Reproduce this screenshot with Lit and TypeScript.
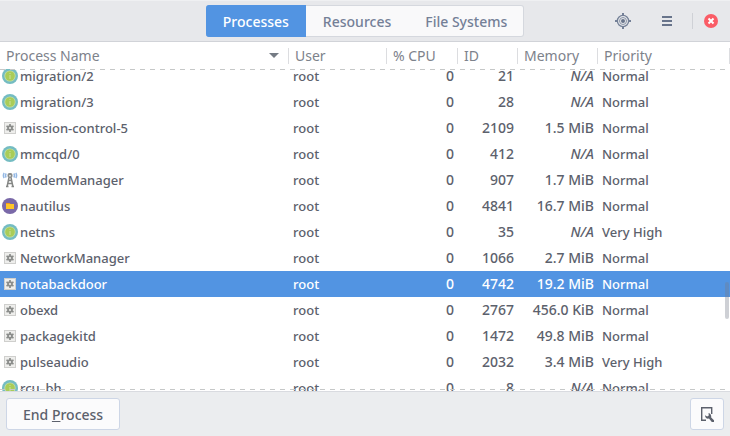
import { LitElement, html, css, svg, nothing } from "lit";
import { customElement, property, state, query } from "lit/decorators.js";
import { classMap } from "lit/directives/class-map.js";

type IconName = "kernel" | "gear" | "modem" | "files";

interface Proc {
  icon: IconName;
  name: string;
  user: string;
  cpu: string;
  id: number;
  memory: string;
  priority: string;
}

const proc = (icon: IconName, name: string, id: number, memory = "N/A", priority = "Normal"): Proc => ({
  icon, name, user: "root", cpu: "0", id, memory, priority,
});

const PROCESSES: Proc[] = [
  proc("kernel", "migration/2", 21),
  proc("kernel", "migration/3", 28),
  proc("gear", "mission-control-5", 2109, "1.5 MiB"),
  proc("kernel", "mmcqd/0", 412),
  proc("modem", "ModemManager", 907, "1.7 MiB"),
  proc("files", "nautilus", 4841, "16.7 MiB"),
  proc("kernel", "netns", 35, "N/A", "Very High"),
  proc("gear", "NetworkManager", 1066, "2.7 MiB"),
  proc("gear", "notabackdoor", 4742, "19.2 MiB"),
  proc("gear", "obexd", 2767, "456.0 KiB"),
  proc("gear", "packagekitd", 1472, "49.8 MiB"),
  proc("gear", "pulseaudio", 2032, "3.4 MiB", "Very High"),
  proc("kernel", "rcu_bh", 8),
];

const ICONS = {
  kernel: svg`
    <circle cx="8" cy="8" r="8" fill="#74bcc2"/>
    <circle cx="8" cy="8" r="5.6" fill="#c5dfa8"/>
    <circle cx="8" cy="8" r="4.8" fill="#a9cc58"/>
    <path d="M8 5v1M8 7v4" stroke="#c6de90" stroke-width="1.2"/>`,
  gear: svg`
    <rect x="2.5" y="2.5" width="11" height="11" fill="#eeeeec" stroke="#cfcfcd"/>
    <path d="M8 4v8M4.5 6l7 4M11.5 6l-7 4" stroke="#8b8d8b" stroke-width="1.7"/>
    <circle cx="8" cy="8" r="2.8" fill="#8b8d8b"/>
    <circle cx="8" cy="8" r="1.1" fill="#eeeeec"/>`,
  modem: svg`
    <path d="M4.200 1.500q-1.300 2 0 4M11.800 1.500q1.300 2 0 4M2.200 1q-1.600 2.500 0 5M13.800 1q1.600 2.500 0 5" fill="none" stroke="#94b8e4" stroke-width="1.500"/>
    <path d="M7 5.500L5 15M9 5.500l2 9.500M6.500 8.500h3M6 11.500h4M4 14.500h2.500M9.500 14.500h2.500" fill="none" stroke="#858785" stroke-width="1.500"/>
    <rect x="5.500" y="1" width="5" height="5" rx="2" fill="#8b8d8b"/>
    <rect x="7" y="3" width="2" height="1.500" fill="#d5d7d3"/>`,
  files: svg`
    <circle cx="8" cy="8" r="8" fill="#7a69a8"/>
    <path d="M4 5h3.500l1 1H12v5H4z" fill="#f59a16"/>
    <rect x="4" y="6" width="8" height="5" fill="#ffc527"/>`,
};

@customElement("process-icon")
export class ProcessIcon extends LitElement {
  static styles = css`
    :host { display: block; flex: none; width: 16px; height: 16px; }
    .glyph { display: block; width: 100%; height: 100%; }
  `;

  @property() name: IconName = "gear";

  render() {
    return html`<svg class="glyph" viewBox="0 0 16 16" aria-hidden="true">${ICONS[this.name]}</svg>`;
  }
}

@customElement("header-bar")
export class HeaderBar extends LitElement {
  static styles = css`
    :host {
      display: grid;
      grid-template-columns: 1fr auto 1fr;
      align-items: center;
      padding: 5px 0 4px;
      background: #e7e8eb;
      border-bottom: 1px solid #d1d3d8;
      box-shadow: inset 0 1px #eff0f2;
      font-size: 14px;
    }
    button { font: inherit; color: inherit; margin: 0; padding: 0; border: 0; background: none; }
    .tabs { grid-column: 2; display: flex; height: 32px; }
    .tab {
      box-sizing: border-box;
      padding: 0 17px;
      background: #f9f9fa;
      border: 1px solid #d5d8de;
      border-width: 1px 0;
      color: #748097;
    }
    .tab:first-child { border-radius: 3px 0 0 3px; }
    .tab:last-child { padding-right: 16px; border-right-width: 1px; border-radius: 0 3px 3px 0; }
    .tab.active { background: #5294e2; border-color: #5294e2; color: #fff; }
    .actions { display: flex; align-items: center; justify-content: flex-end; padding-right: 12px; }
    .icon { display: grid; place-items: center; width: 44px; height: 32px; }
    .divider { width: 1px; height: 16px; margin-left: 3px; background: #cfd1d6; }
    .close { width: 14px; margin-left: 11px; }
    svg { display: block; }
  `;

  @state() private active = "Processes";

  render() {
    return html`
      <nav class="tabs">
        ${["Processes", "Resources", "File Systems"].map((label) => html`
          <button
            class=${classMap({ tab: true, active: label === this.active })}
            aria-pressed=${label === this.active}
            @click=${() => (this.active = label)}
          >${label}</button>`)}
      </nav>
      <div class="actions">
        <button class="icon" aria-label="Select window">
          <svg width="16" height="16" viewBox="0 0 16 16" fill="none" stroke="#748097">
            <circle cx="8" cy="8" r="5.600" stroke-width="1.300"/>
            <circle cx="8" cy="8" r="3.500" stroke-width=".8"/>
            <circle cx="8" cy="8" r="2" fill="#68748b" stroke="none"/>
            <path d="M8 0v3M8 13v3M0 8h3M13 8h3" stroke-width="2"/>
          </svg>
        </button>
        <button class="icon" aria-label="Menu">
          <svg width="10" height="10" viewBox="0 0 10 10">
            <path d="M0 1h10M0 5h10M0 9h10" stroke="#68748b" stroke-width="2"/>
          </svg>
        </button>
        <span class="divider"></span>
        <button class="close" aria-label="Close">
          <svg width="14" height="14" viewBox="0 0 14 14">
            <circle cx="7" cy="7" r="7" fill="#fa5c66"/>
            <path d="M4.500 4.500l5 5M9.500 4.500l-5 5" stroke="#fff" stroke-width="2"/>
          </svg>
        </button>
      </div>`;
  }
}

@customElement("process-list")
export class ProcessList extends LitElement {
  static styles = css`
    :host { display: block; position: relative; min-height: 0; overflow: hidden; background: #fff; }
    .scroller { height: 100%; overflow-y: auto; overflow-x: hidden; scrollbar-width: none; }
    table { width: 100%; table-layout: fixed; border-collapse: separate; border-spacing: 0; }
    .w-user { width: 98px; }
    .w-cpu { width: 71px; }
    .w-id { width: 60px; }
    .w-memory { width: 80px; }
    .w-priority { width: 132px; }
    th {
      position: sticky;
      top: 0;
      z-index: 1;
      height: 27px;
      padding: 0;
      background: #fff;
      color: #7d828b;
      font-size: 14px;
      font-weight: 400;
      text-align: left;
    }
    .head {
      display: flex;
      align-items: center;
      justify-content: space-between;
      height: 16px;
      line-height: 16px;
      padding: 0 9px 0 6px;
      border-right: 1px solid #dcdde0;
      white-space: nowrap;
    }
    .arrow { display: block; }
    td { height: 26px; padding: 0 4px; white-space: nowrap; line-height: 24px; }
    .name { padding: 0 2px; }
    .cell { display: flex; align-items: center; gap: 2px; }
    .num { text-align: right; font-size: 14px; }
    .priority { padding-left: 4px; }
    .na { font-style: italic; }
    .selected { background: #5294e2; color: #fff; }
    .edge {
      position: absolute;
      z-index: 2;
      left: 0;
      right: 0;
      height: 1px;
      background: repeating-linear-gradient(90deg, #c6c8c8 0 5px, transparent 5px 10px);
      pointer-events: none;
    }
    .top { top: 27px; }
    .bottom { bottom: 1px; }
    .thumb {
      position: absolute;
      z-index: 2;
      right: 1px;
      bottom: 72px;
      width: 4px;
      height: 37px;
      border-radius: 2px;
      background: rgba(120, 126, 138, 0.36);
    }
  `;

  @property({ attribute: false }) rows: Proc[] = [];
  @state() private selected = 4742;
  @query(".scroller") private scroller!: HTMLElement;

  firstUpdated() {
    this.scroller.scrollTop = 6;
  }

  render() {
    const heads = ["Process Name", "User", "% CPU", "ID", "Memory", "Priority"];
    return html`
      <div class="scroller">
        <table>
          <colgroup>
            <col /><col class="w-user" /><col class="w-cpu" /><col class="w-id" />
            <col class="w-memory" /><col class="w-priority" />
          </colgroup>
          <thead>
            <tr>
              ${heads.map((label, i) => html`
                <th scope="col"><div class="head">${label}${i === 0
                  ? html`<svg class="arrow" width="10" height="5" viewBox="0 0 10 5"><path d="M0 0h10L5 5z" fill="#757b84"/></svg>`
                  : nothing}</div></th>`)}
            </tr>
          </thead>
          <tbody>
            ${this.rows.map((p) => html`
              <tr class=${classMap({ selected: p.id === this.selected })} @click=${() => (this.selected = p.id)}>
                <td class="name"><div class="cell"><process-icon name=${p.icon}></process-icon>${p.name}</div></td>
                <td>${p.user}</td>
                <td class="num">${p.cpu}</td>
                <td class="num">${p.id}</td>
                <td class=${classMap({ num: true, na: p.memory === "N/A" })}>${p.memory}</td>
                <td class="priority">${p.priority}</td>
              </tr>`)}
          </tbody>
        </table>
      </div>
      <div class="edge top"></div>
      <div class="edge bottom"></div>
      <div class="thumb"></div>`;
  }
}

@customElement("app-root")
export class AppRoot extends LitElement {
  static styles = css`
    :host {
      display: flex;
      flex-direction: column;
      height: 100vh;
      overflow: hidden;
      color: #5c616c;
      font: 500 13px "Noto Sans", "Open Sans", sans-serif;
    }
    .list { flex: 1; }
    .footer {
      display: flex;
      justify-content: space-between;
      padding: 6px;
      background: #ebedef;
      border-top: 1px solid #d9dbe0;
      font-size: 14px;
    }
    .button {
      display: grid;
      place-items: center;
      box-sizing: border-box;
      height: 32px;
      margin: 0;
      padding: 0 16px;
      border: 1px solid #cdd6e6;
      border-radius: 3px;
      background: #fbfbfc;
      color: inherit;
      font: inherit;
    }
    .square { width: 34px; padding: 0; }
  `;

  render() {
    return html`
      <header-bar></header-bar>
      <process-list class="list" .rows=${PROCESSES}></process-list>
      <footer class="footer">
        <button class="button"><span>End <u>P</u>rocess</span></button>
        <button class="button square" aria-label="Process properties">
          <svg width="14" height="16" viewBox="0 0 14 16">
            <path d="M6 14.300H1.700V1.700h10V8" fill="none" stroke="#5c616c" stroke-width="1.400"/>
            <path d="M8.500 7l.3 2.500-1.600 1-2.200-1.300c0 2.300 1.700 3.900 4 3.300l2.800 3.500H14v-1.800l-2.800-2.700c.4-2.300-.8-4-2.700-4.500z" fill="#5c616c"/>
          </svg>
        </button>
      </footer>`;
  }
}
